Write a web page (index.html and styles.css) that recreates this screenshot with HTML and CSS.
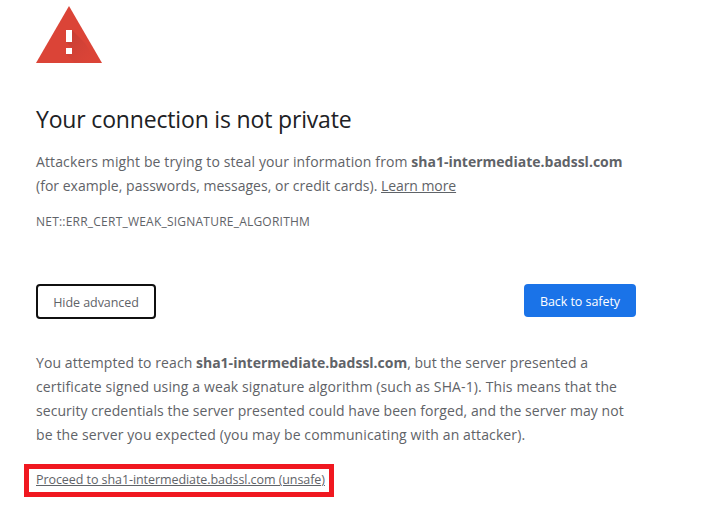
FILE: index.html
```html
<!DOCTYPE html>
<html lang="en">
<head>
<meta charset="utf-8">
<title>Privacy error</title>
<link rel="stylesheet" href="styles.css">
</head>
<body>
<main class="page">
  <svg class="warning" width="66" height="57" viewBox="0 0 66 57" aria-hidden="true">
    <defs>
      <linearGradient id="shade" x1="0" y1="0" x2="1" y2="1">
        <stop offset="0" stop-color="#b83a32" stop-opacity=".75"/>
        <stop offset=".65" stop-color="#cf4137" stop-opacity=".35"/>
        <stop offset="1" stop-color="#db4437" stop-opacity="0"/>
      </linearGradient>
    </defs>
    <path fill="#db4437" d="M33 0 66 57H0Z"/>
    <path fill="url(#shade)" d="M36 24 49.500 37.500 61 57H39L30 48 36 42 30 36Z"/>
    <path fill="#fff" d="M30 24h6v12h-6zM30 42h6v6h-6z"/>
  </svg>
  <h1 class="title">Your connection is not private</h1>
  <p class="text">
    <span class="line"><span class="intro">Attackers might be trying to steal your information from</span> <strong>sha1-intermediate.badssl.com</strong></span>
    <span class="line"><span class="examples">(for example, passwords, messages, or credit cards).</span> <a class="learn" href="#">Learn more</a></span>
  </p>
  <p class="code">NET::ERR_CERT_WEAK_SIGNATURE_ALGORITHM</p>
  <div class="actions">
    <button class="btn secondary">Hide advanced</button>
    <button class="btn primary">Back to safety</button>
  </div>
  <p class="text details">
    <span class="line"><span class="attempt">You attempted to reach</span> <strong>sha1-intermediate.badssl.com</strong>, but the server presented a</span>
    <span class="line certificate">certificate signed using a weak signature algorithm (such as SHA-1). This means that the</span>
    <span class="line security">security credentials the server presented could have been forged, and the server may not</span>
    <span class="line attacker">be the server you expected (you may be communicating with an attacker).</span>
  </p>
  <div class="highlight"><a class="proceed" href="#">Proceed to sha1-intermediate.badssl.com (unsafe)</a></div>
</main>
</body>
</html>
```
FILE: styles.css
```css
* { box-sizing: border-box; }
body {
  margin: 0;
  background: #fff;
  color: #5f6368;
  font-family: "Open Sans", "Noto Sans", sans-serif;
}
.page { width: 600px; margin: 6px 0 0 36px; }
.warning { display: block; }
.title {
  margin: 40px 0 0;
  color: #202124;
  font-size: 23px;
  font-weight: 400;
  line-height: 32px;
  letter-spacing: -0.17px;
  white-space: nowrap;
}
.text { margin: 15px 0 0; font-size: 14px; line-height: 24px; }
.line { display: block; white-space: nowrap; }
.text strong { font-weight: 700; }
.intro { letter-spacing: 0.125px; }
.examples { letter-spacing: 0.02px; }
.learn { letter-spacing: -0.08px; }
.attempt { letter-spacing: 0.09px; }
.certificate { letter-spacing: 0.126px; }
.security { letter-spacing: 0.06px; }
.attacker { letter-spacing: 0.115px; }
a { color: inherit; text-decoration: underline 1px; text-underline-offset: 1px; }
.code {
  margin: 14px 0 0;
  font-size: 12px;
  line-height: 20px;
  letter-spacing: 0.22px;
  white-space: nowrap;
}
.actions {
  display: flex;
  justify-content: space-between;
  align-items: flex-start;
  margin-top: 52px;
}
.btn {
  padding: 2px 0 0;
  border: 0;
  border-radius: 4px;
  font: 12.5px/20px "Open Sans", "Noto Sans", sans-serif;
  letter-spacing: -0.05px;
  white-space: nowrap;
}
.secondary {
  width: 120px;
  height: 35px;
  border: 2px solid #101010;
  background: #fff;
  color: #5f6368;
}
.primary { width: 112px; height: 33px; background: #1a73e8; color: #fff; }
.details { margin-top: 32px; }
.highlight {
  width: 310px;
  height: 33px;
  margin: 17px 0 0 -12px;
  padding-left: 7px;
  border: 5px solid #f01820;
  font-size: 12.5px;
  line-height: 21px;
  letter-spacing: -0.07px;
  white-space: nowrap;
}
```
